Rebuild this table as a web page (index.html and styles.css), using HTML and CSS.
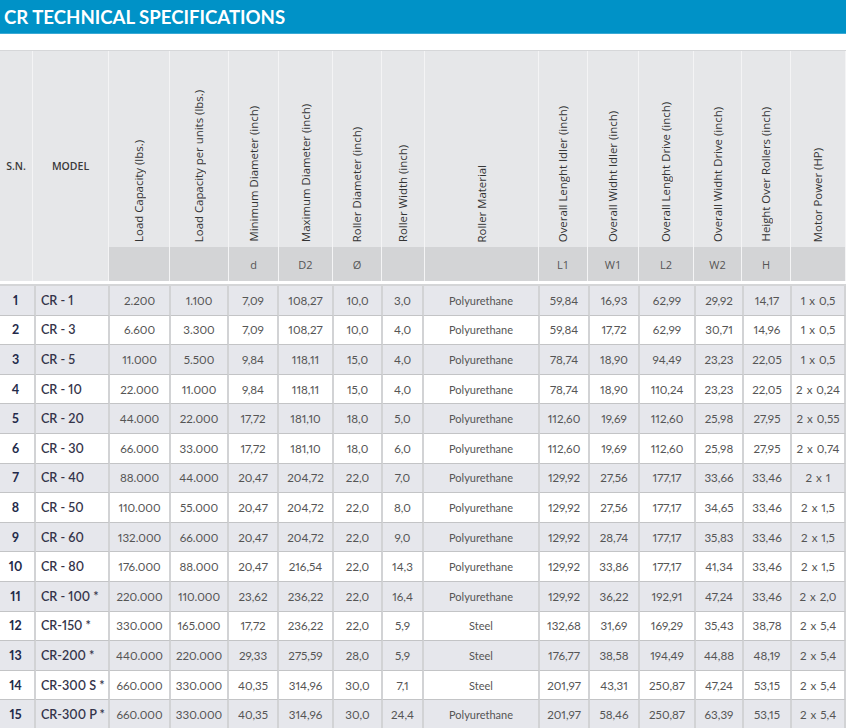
FILE: index.html
```html
<!DOCTYPE html>
<html lang="en">
<head>
<meta charset="utf-8">
<title>CR Technical Specifications</title>
<link rel="stylesheet" href="styles.css">
</head>
<body>
<header class="bar"><h1 class="title">CR TECHNICAL SPECIFICATIONS</h1></header>

<div class="head">
  <div class="hc span2 plain">S.N.</div>
  <div class="hc span2 plain">MODEL</div>
  <div class="hc rot"><span>Load Capacity (lbs.)</span></div>
  <div class="hc rot"><span>Load Capacity per units (lbs.)</span></div>
  <div class="hc rot"><span>Minimum Diameter (inch)</span></div>
  <div class="hc rot"><span>Maximum Diameter (inch)</span></div>
  <div class="hc rot"><span>Roller Diameter (inch)</span></div>
  <div class="hc rot"><span>Roller Width (inch)</span></div>
  <div class="hc rot"><span>Roller Material</span></div>
  <div class="hc rot"><span>Overall Lenght Idler (inch)</span></div>
  <div class="hc rot"><span>Overall Widht Idler (inch)</span></div>
  <div class="hc rot"><span>Overall Lenght Drive (inch)</span></div>
  <div class="hc rot"><span>Overall Widht Drive (inch)</span></div>
  <div class="hc rot"><span>Height Over Rollers (inch)</span></div>
  <div class="hc rot"><span>Motor Power (HP)</span></div>
  <div class="sc"></div>
  <div class="sc"></div>
  <div class="sc">d</div>
  <div class="sc">D2</div>
  <div class="sc">Ø</div>
  <div class="sc"></div>
  <div class="sc"></div>
  <div class="sc">L1</div>
  <div class="sc">W1</div>
  <div class="sc">L2</div>
  <div class="sc">W2</div>
  <div class="sc">H</div>
  <div class="sc"></div>
</div>

<div class="body" id="body"></div>

<script src="app.js"></script>
</body>
</html>
```

FILE: app.js
```js
const rows = [
  ["1","CR - 1","2.200","1.100","7,09","108,27","10,0","3,0","Polyurethane","59,84","16,93","62,99","29,92","14,17","1 x 0,5"],
  ["2","CR - 3","6.600","3.300","7,09","108,27","10,0","4,0","Polyurethane","59,84","17,72","62,99","30,71","14,96","1 x 0,5"],
  ["3","CR - 5","11.000","5.500","9,84","118,11","15,0","4,0","Polyurethane","78,74","18,90","94,49","23,23","22,05","1 x 0,5"],
  ["4","CR - 10","22.000","11.000","9,84","118,11","15,0","4,0","Polyurethane","78,74","18,90","110,24","23,23","22,05","2 x 0,24"],
  ["5","CR - 20","44.000","22.000","17,72","181,10","18,0","5,0","Polyurethane","112,60","19,69","112,60","25,98","27,95","2 x 0,55"],
  ["6","CR - 30","66.000","33.000","17,72","181,10","18,0","6,0","Polyurethane","112,60","19,69","112,60","25,98","27,95","2 x 0,74"],
  ["7","CR - 40","88.000","44.000","20,47","204,72","22,0","7,0","Polyurethane","129,92","27,56","177,17","33,66","33,46","2 x 1"],
  ["8","CR - 50","110.000","55.000","20,47","204,72","22,0","8,0","Polyurethane","129,92","27,56","177,17","34,65","33,46","2 x 1,5"],
  ["9","CR - 60","132.000","66.000","20,47","204,72","22,0","9,0","Polyurethane","129,92","28,74","177,17","35,83","33,46","2 x 1,5"],
  ["10","CR - 80","176.000","88.000","20,47","216,54","22,0","14,3","Polyurethane","129,92","33,86","177,17","41,34","33,46","2 x 1,5"],
  ["11","CR - 100 *","220.000","110.000","23,62","236,22","22,0","16,4","Polyurethane","129,92","36,22","192,91","47,24","33,46","2 x 2,0"],
  ["12","CR-150 *","330.000","165.000","17,72","236,22","22,0","5,9","Steel","132,68","31,69","169,29","35,43","38,78","2 x 5,4"],
  ["13","CR-200 *","440.000","220.000","29,33","275,59","28,0","5,9","Steel","176,77","38,58","194,49","44,88","48,19","2 x 5,4"],
  ["14","CR-300 S *","660.000","330.000","40,35","314,96","30,0","7,1","Steel","201,97","43,31","250,87","47,24","53,15","2 x 5,4"],
  ["15","CR-300 P *","660.000","330.000","40,35","314,96","30,0","24,4","Polyurethane","201,97","58,46","250,87","63,39","53,15","2 x 5,4"]
];
const body = document.getElementById("body");
rows.forEach((r, i) => {
  r.forEach((v, j) => {
    const c = document.createElement("div");
    c.className = "cell" + (i % 2 === 0 ? " odd" : "") + (j === 0 ? " sn" : j === 1 ? " model" : j === 8 ? " mat" : "");
    c.textContent = v;
    body.appendChild(c);
  });
});
```

FILE: styles.css
```css
* { box-sizing: border-box; }
html, body { margin: 0; padding: 0; background: #fff; }
body { width: 846px; overflow: hidden; font-family: Lato, "Open Sans", sans-serif; }

.bar {
  height: 34px;
  background: #0092c7;
  border-bottom: 1px solid #3aa9d4;
  display: flex;
  align-items: center;
  padding-left: 4px;
}
.title {
  margin: 0;
  color: #fff;
  font-family: Lato, sans-serif;
  font-weight: 700;
  font-size: 18.6px;
  letter-spacing: 0;
}

.head {
  margin-top: 16px;
  display: grid;
  grid-template-columns: 33px 76px 61px 59px 50px 54px 49px 43px 114px 49px 51px 55px 48px 49px 55px;
  grid-template-rows: 196px 34px;
  grid-auto-flow: column dense;
  border-top: 1px solid #d6d7d9;
  font-family: "Open Sans", sans-serif;
  color: #333;
}
.hc {
  background: #e6e7e9;
  border-right: 1px solid #f4f4f5;
}
.hc.span2 { grid-row: 1 / span 2; }
.plain {
  display: flex;
  align-items: center;
  justify-content: center;
  font-size: 10.5px;
  font-weight: 600;
  color: #3a3a3a;
}
.rot {
  grid-row: 1;
  display: flex;
  align-items: flex-end;
  justify-content: center;
  padding-bottom: 5px;
}
.rot span {
  writing-mode: vertical-rl;
  transform: rotate(180deg);
  font-size: 11.4px;
  line-height: 14px;
  white-space: nowrap;
}
.sc {
  grid-row: 2;
  background: #d3d4d6;
  border-right: 1px solid #f4f4f5;
  display: flex;
  align-items: center;
  justify-content: center;
  font-size: 11px;
  color: #555;
}

.body {
  margin-top: 3px;
  display: grid;
  grid-template-columns: 36px 74px 61px 58px 50px 55px 49px 41px 116px 50px 50px 56px 48px 48px 54px;
  grid-auto-rows: 29.6px;
  border-top: 2px solid #d4d5d7;
}
.cell {
  display: flex;
  align-items: center;
  justify-content: center;
  border-right: 2px solid #d2d3d5;
  border-bottom: 1px solid #c3c4c6;
  font-size: 11.6px;
  color: #555;
  background: #fff;
  white-space: nowrap;
  font-variant-numeric: proportional-nums;
  word-spacing: 1px;
}
.cell.odd { background: #e6e7ec; }
.cell.sn {
  color: #232a4a;
  font-weight: 700;
  font-size: 12.5px;
  padding-right: 3px;
}
.cell.model {
  justify-content: flex-start;
  padding-left: 5px;
  color: #34344a;
  font-weight: 600;
  font-size: 12.6px;
  word-spacing: 0;
}
.cell.mat { font-size: 11px; word-spacing: 0; }
```
